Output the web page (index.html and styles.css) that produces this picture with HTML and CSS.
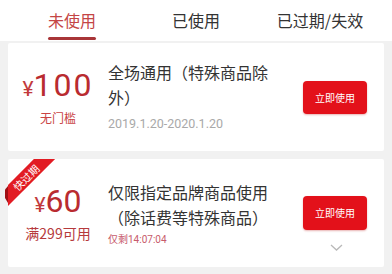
FILE: index.html
```html
<!DOCTYPE html>
<html lang="zh-CN">
<head>
<meta charset="utf-8">
<title>优惠券</title>
<link rel="stylesheet" href="styles.css">
</head>
<body>
<nav class="tabs">
  <div class="tab active"><span class="tab-label">未使用</span></div>
  <div class="tab"><span class="tab-label">已使用</span></div>
  <div class="tab"><span class="tab-label">已过期/失效</span></div>
</nav>
<main class="list">
  <section class="card">
    <div class="price-col">
      <div class="price"><span class="cur">¥</span><span class="amt amt-wide">100</span></div>
      <div class="cond">无门槛</div>
    </div>
    <div class="info info-first">
      <div class="title">全场通用（特殊商品除外）</div>
      <div class="date">2019.1.20-2020.1.20</div>
    </div>
    <button class="use-btn" type="button">立即使用</button>
  </section>
  <section class="card">
    <div class="corner"><div class="ribbon">快过期</div></div>
    <div class="fold"></div>
    <div class="price-col">
      <div class="price"><span class="cur">¥</span><span class="amt">60</span></div>
      <div class="cond cond-lg">满299可用</div>
    </div>
    <div class="info">
      <div class="title">仅限指定品牌商品使用（除话费等特殊商品）</div>
      <div class="remain">仅剩<span class="num">14:07:04</span></div>
    </div>
    <button class="use-btn use-btn-tall" type="button">立即使用</button>
    <svg class="chevron" width="13" height="7" viewBox="0 0 13 7"><path d="M1 1 L6.5 6 L12 1" fill="none" stroke="#b9b9b9" stroke-width="1.3"/></svg>
  </section>
</main>
</body>
</html>
```
FILE: styles.css
```css
* { box-sizing: border-box; }
html, body { margin: 0; padding: 0; }
body {
  width: 392px;
  height: 274px;
  overflow: hidden;
  background: #f1f1f1;
  font-family: "Noto Sans CJK SC", "Noto Sans", sans-serif;
  color: #2e2e2e;
}
.tabs {
  display: grid;
  grid-template-columns: repeat(3, 1fr);
  height: 41px;
  padding: 0 10px;
  background: #fff;
}
.tab {
  display: flex;
  flex-direction: column;
  align-items: center;
}
.tab-label {
  display: block;
  padding-top: 10px;
  font-size: 16px;
  line-height: 20px;
  color: #333;
}
.tab.active .tab-label { color: #c44545; }
.tab.active .tab-label::after {
  content: "";
  display: block;
  height: 3px;
  margin-top: 7px;
  border-radius: 2px;
  background: #a83538;
}
.list {
  display: flex;
  flex-direction: column;
  gap: 8px;
  padding: 2px 8px 0;
}
.card {
  position: relative;
  display: flex;
  align-items: center;
  height: 108px;
  background: #fff;
  border-radius: 2px;
}
.price-col {
  width: 100px;
  flex: none;
  display: flex;
  flex-direction: column;
  align-items: center;
}
.price {
  font-family: Roboto, "Liberation Sans", sans-serif;
  font-weight: 400;
  color: #b92b30;
  line-height: 34px;
  white-space: nowrap;
}
.cur { font-size: 21px; color: #c23a3c; }
.amt { font-size: 32px; }
.amt-wide { letter-spacing: 2px; }
.cond {
  margin-top: 2px;
  font-size: 12px;
  line-height: 16px;
  color: #c94343;
}
.cond-lg {
  margin-top: 0;
  font-size: 14px;
  line-height: 18px;
  color: #b63a3c;
}
.info {
  width: 170px;
  flex: none;
}
.info-first { padding-bottom: 2px; }
.title {
  font-size: 16px;
  line-height: 25px;
  color: #333;
}
.date {
  margin-top: 6px;
  font-family: Roboto, "Liberation Sans", sans-serif;
  font-size: 12.5px;
  line-height: 16px;
  color: #a9a9a9;
}
.remain {
  margin-top: 2px;
  font-size: 10px;
  line-height: 14px;
  color: #c75b6b;
}
.remain .num { font-family: Roboto, "Liberation Sans", sans-serif; }
.use-btn {
  margin-left: auto;
  margin-right: 17px;
  width: 64px;
  height: 33px;
  padding: 0;
  border: none;
  border-radius: 4px;
  background: #e3111a;
  box-shadow: 0 1px 2px rgba(180, 0, 0, 0.3);
  color: #fff;
  font-family: "Noto Sans CJK SC", sans-serif;
  font-size: 10px;
  line-height: 33px;
}
.use-btn-tall { height: 34px; line-height: 34px; }
.chevron {
  position: absolute;
  right: 41px;
  bottom: 16px;
}
.corner {
  position: absolute;
  left: 0;
  top: 0;
  width: 60px;
  height: 60px;
  overflow: hidden;
}
.ribbon {
  position: absolute;
  left: -22px;
  top: 10.5px;
  width: 80px;
  height: 15px;
  background: #e21b23;
  color: #fff;
  font-size: 10.5px;
  line-height: 15px;
  text-align: center;
  transform: rotate(-45deg);
}
.fold {
  position: absolute;
  left: -3px;
  top: 27px;
  width: 3px;
  height: 17px;
  background: #9e0f14;
  clip-path: polygon(100% 0, 100% 100%, 0 70%, 0 20%);
}
```
